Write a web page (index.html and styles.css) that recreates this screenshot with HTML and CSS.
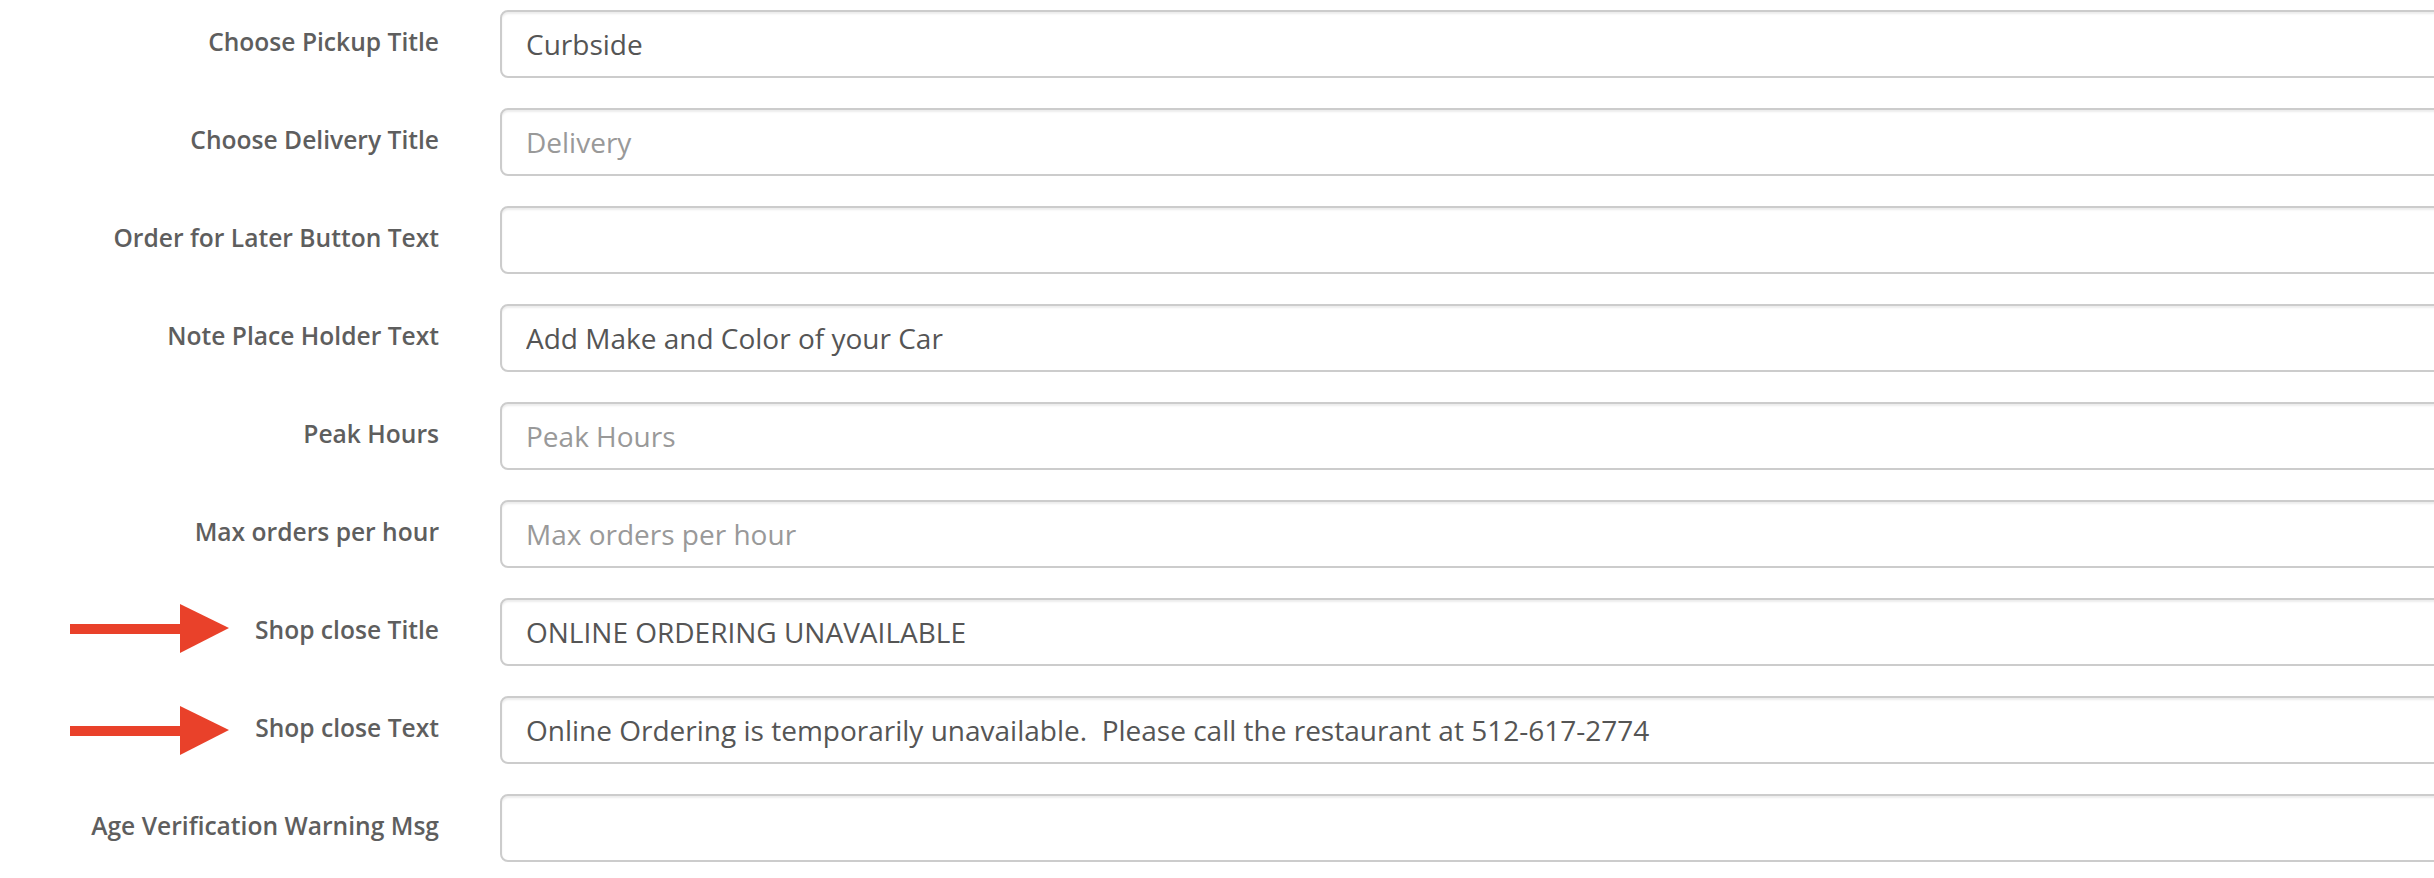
FILE: index.html
```html
<!DOCTYPE html>
<html lang="en">
<head>
    <meta charset="UTF-8">
    <meta name="viewport" content="width=device-width, initial-scale=1.0">
    <title>Shop Settings</title>
    <link rel="stylesheet" href="styles.css">
</head>
<body>
    <form class="settings">
        <div class="form-group">
            <label class="control-label">Choose Pickup Title</label>
            <input type="text" class="form-control" value="Curbside">
        </div>
        <div class="form-group">
            <label class="control-label">Choose Delivery Title</label>
            <input type="text" class="form-control" placeholder="Delivery">
        </div>
        <div class="form-group">
            <label class="control-label">Order for Later Button Text</label>
            <input type="text" class="form-control">
        </div>
        <div class="form-group">
            <label class="control-label">Note Place Holder Text</label>
            <input type="text" class="form-control" value="Add Make and Color of your Car">
        </div>
        <div class="form-group">
            <label class="control-label">Peak Hours</label>
            <input type="text" class="form-control" placeholder="Peak Hours">
        </div>
        <div class="form-group">
            <label class="control-label">Max orders per hour</label>
            <input type="text" class="form-control" placeholder="Max orders per hour">
        </div>
        <div class="form-group">
            <svg class="arrow arrow-title" width="159" height="49" viewBox="0 0 159 49">
                <rect x="0" y="20" width="111" height="10" fill="#e9412a"/>
                <polygon points="110,0 159,24 110,49" fill="#e9412a"/>
            </svg>
            <label class="control-label">Shop close Title</label>
            <input type="text" class="form-control" value="ONLINE ORDERING UNAVAILABLE">
        </div>
        <div class="form-group">
            <svg class="arrow arrow-text" width="159" height="49" viewBox="0 0 159 49">
                <rect x="0" y="20" width="111" height="10" fill="#e9412a"/>
                <polygon points="110,0 159,24 110,49" fill="#e9412a"/>
            </svg>
            <label class="control-label">Shop close Text</label>
            <input type="text" class="form-control" value="Online Ordering is temporarily unavailable.  Please call the restaurant at 512-617-2774">
        </div>
        <div class="form-group">
            <label class="control-label">Age Verification Warning Msg</label>
            <input type="text" class="form-control">
        </div>
    </form>
</body>
</html>
```

FILE: styles.css
```css
body {
    margin: 0;
    background: #fff;
    font-family: "Open Sans", "Liberation Sans", sans-serif;
    overflow: hidden;
}
.settings {
    padding-top: 10px;
}
.form-group {
    position: relative;
    display: flex;
    align-items: flex-start;
    margin-bottom: 30px;
}
.control-label {
    width: 439px;
    flex: none;
    padding-top: 15px;
    text-align: right;
    font-size: 24.6px;
    font-weight: 600;
    line-height: 34px;
    color: #5e5e5e;
}
.form-control {
    flex: none;
    box-sizing: border-box;
    width: 2040px;
    height: 68px;
    margin-left: 61px;
    padding: 12px 24px;
    border: 2px solid #ccc;
    border-radius: 8px;
    box-shadow: inset 0 2px 2px rgba(0, 0, 0, .075);
    background: #fff;
    font-family: "Open Sans", "Liberation Sans", sans-serif;
    font-size: 28px;
    line-height: 40px;
    color: #555;
    outline: none;
}
.form-control::placeholder {
    color: #999;
}
.arrow {
    position: absolute;
    left: 70px;
}
.arrow-title {
    top: 6px;
}
.arrow-text {
    top: 10px;
}
```
